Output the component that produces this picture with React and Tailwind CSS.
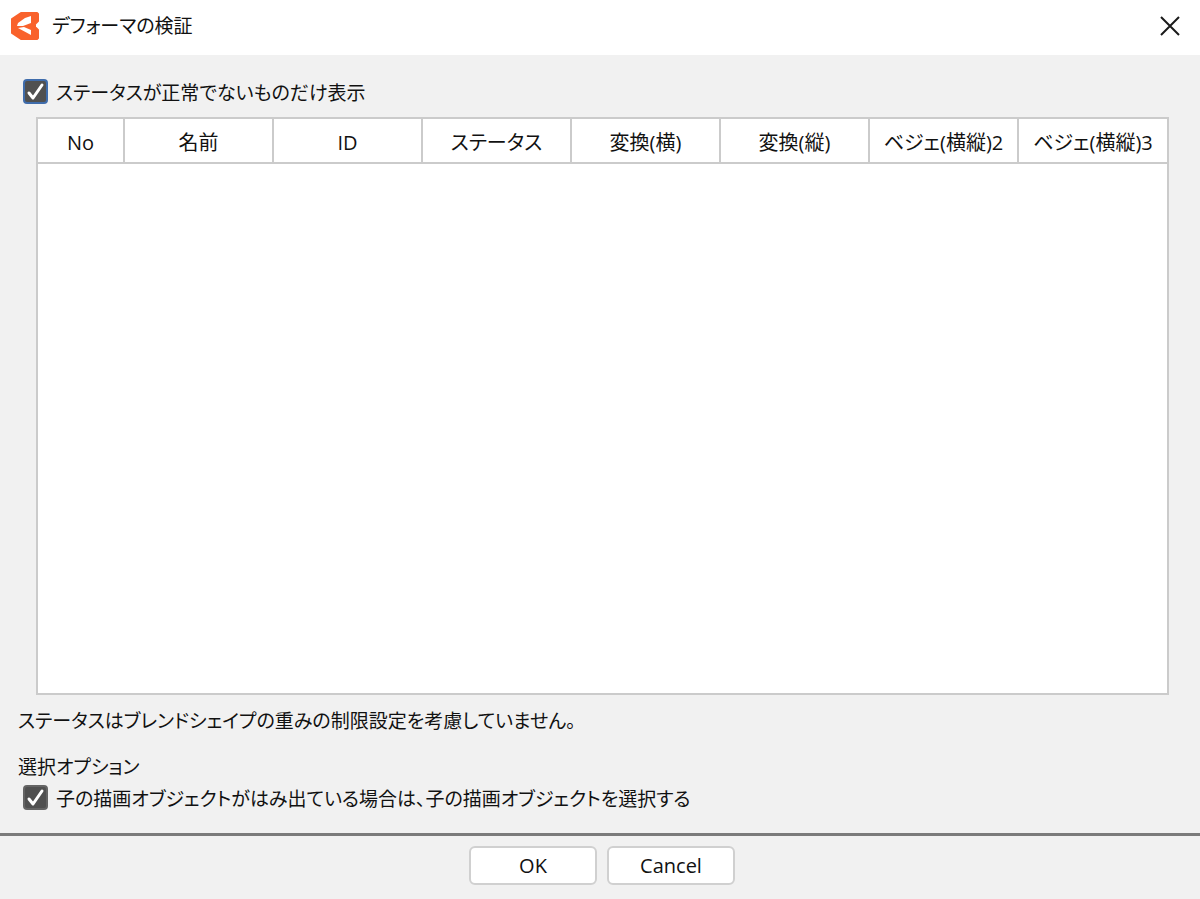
import React, { useState } from 'react';

const columns = ['No', '名前', 'ID', 'ステータス', '変換(横)', '変換(縦)', 'ベジェ(横縦)2', 'ベジェ(横縦)3'];

const Logo = () => (
  <svg viewBox="0 0 30 30" className="w-[30px] h-[30px]" aria-hidden="true">
    <path
      fill="#f9622c"
      stroke="#f9622c"
      strokeWidth="2"
      strokeLinejoin="round"
      d="M11 2 L27 2 L28 3 L28 10 L25 13 L25 16 L28 19 L28 27 L27 28 L11 28 L2 22 L2 8 Z"
    />
    <path fill="#fff" d="M21 5 L21 12 L13 15 L7 15 L8 12 L15 7 Z" />
    <path fill="#fff" d="M8 17 L14 16 L21 19 L21 24 Z" />
  </svg>
);

const CloseIcon = () => (
  <svg viewBox="0 0 20 20" className="w-5 h-5" aria-hidden="true">
    <path d="M1 1 L19 19 M19 1 L1 19" stroke="#1a1a1a" strokeWidth="2" fill="none" />
  </svg>
);

const CheckOption = ({ id, label, checked, onChange, boxClass }) => (
  <div className="flex items-center gap-2">
    <span className="grid shrink-0">
      <input
        id={id}
        type="checkbox"
        checked={checked}
        onChange={(e) => onChange(e.target.checked)}
        className={`peer col-start-1 row-start-1 appearance-none w-[25px] h-[25px] rounded-sm border-2 bg-white checked:bg-[#505050] ${boxClass}`}
      />
      <svg
        viewBox="0 0 25 25"
        className="col-start-1 row-start-1 w-[25px] h-[25px] pointer-events-none invisible peer-checked:visible"
        aria-hidden="true"
      >
        <path
          d="M6 14 L10 19 L19 6"
          fill="none"
          stroke="#fff"
          strokeWidth="3"
          strokeLinecap="round"
          strokeLinejoin="round"
        />
      </svg>
    </span>
    <label htmlFor={id} className="pt-1">{label}</label>
  </div>
);

const App = () => {
  const [onlyAbnormal, setOnlyAbnormal] = useState(true);
  const [selectChildren, setSelectChildren] = useState(true);

  return (
    <div className="min-h-screen flex flex-col bg-[#f1f1f1] text-[#111] text-[19px] leading-6 font-['Open_Sans','Noto_Sans_CJK_JP',sans-serif] [font-feature-settings:'palt']">
      <header className="flex items-center gap-3 h-[55px] pl-[10px] pr-5 pb-1 bg-white">
        <Logo />
        <h1 className="flex-1">デフォーマの検証</h1>
        <button type="button" aria-label="閉じる">
          <CloseIcon />
        </button>
      </header>

      <main className="flex-1 flex flex-col pt-[22px] pb-[22px]">
        <div className="px-[23px]">
          <CheckOption
            id="only-abnormal"
            label="ステータスが正常でないものだけ表示"
            checked={onlyAbnormal}
            onChange={setOnlyAbnormal}
            boxClass="border-[#3f6cab]"
          />
        </div>

        <div className="flex-1 mt-3 ml-9 mr-[31px] border-2 border-[#cbcbcb] bg-white">
          <table className="w-full table-fixed border-collapse text-xl">
            <thead>
              <tr>
                {columns.map((name) => (
                  <th
                    key={name}
                    scope="col"
                    className="h-11 p-0 pt-1 font-normal whitespace-nowrap border-b-2 border-r-2 border-[#cbcbcb] first:w-[86px] last:border-r-0"
                  >
                    {name}
                  </th>
                ))}
              </tr>
            </thead>
            <tbody />
          </table>
        </div>

        <p className="mt-[14px] px-[18px]">ステータスはブレンドシェイプの重みの制限設定を考慮していません。</p>

        <section className="mt-[22px]">
          <h2 className="px-[18px]">選択オプション</h2>
          <div className="mt-1 px-[23px]">
            <CheckOption
              id="select-children"
              label="子の描画オブジェクトがはみ出ている場合は、子の描画オブジェクトを選択する"
              checked={selectChildren}
              onChange={setSelectChildren}
              boxClass="border-[#646464]"
            />
          </div>
        </section>
      </main>

      <footer className="flex justify-center gap-[10px] pt-[10px] pb-[14px] pl-1 border-t-3 border-[#7b7b7b] text-xl">
        <button type="button" className="w-32 h-[39px] rounded-md border-2 border-[#d0d0d0] bg-white">
          OK
        </button>
        <button type="button" className="w-32 h-[39px] rounded-md border-2 border-[#d0d0d0] bg-white">
          Cancel
        </button>
      </footer>
    </div>
  );
};

export default App;
